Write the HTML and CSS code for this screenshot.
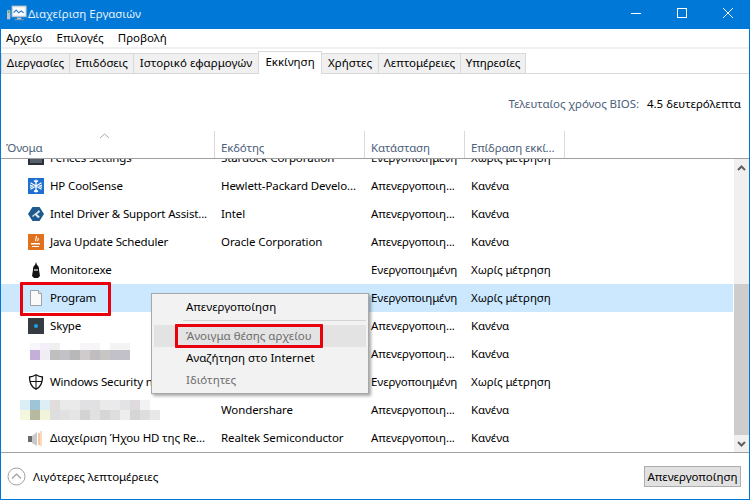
FILE: index.html
```html
<!DOCTYPE html>
<html lang="el">
<head>
<meta charset="utf-8">
<title>Διαχείριση Εργασιών</title>
<link rel="stylesheet" href="styles.css">
</head>
<body>
<div class="window">
  <header class="titlebar">
    <svg class="app-icon" width="20" height="17" viewBox="0 0 24 20">
      <rect x="0" y="6" width="4" height="11" fill="#b9c4cc"/>
      <rect x="1" y="7" width="2" height="2" fill="#4caf50"/>
      <rect x="6" y="1" width="17" height="13" fill="#e8eef2" stroke="#aeb9c1"/>
      <rect x="8" y="3" width="13" height="9" fill="#fff"/>
      <path d="M8 9l3-3 3 3 3-2 3 2" fill="none" stroke="#2f7fd6" stroke-width="1.4"/>
      <rect x="12" y="15" width="5" height="2" fill="#c3ccd2"/>
      <rect x="9" y="17" width="11" height="1" fill="#9aa6ae"/>
    </svg>
    <span class="title">Διαχείριση Εργασιών</span>
    <div class="controls">
      <svg width="46" height="29" viewBox="0 0 46 29"><path d="M18 13.500h10" stroke="#fff"/></svg>
      <svg width="46" height="29" viewBox="0 0 46 29"><rect x="18.500" y="8.500" width="9" height="9" fill="none" stroke="#fff"/></svg>
      <svg width="46" height="29" viewBox="0 0 46 29"><path d="M18 8l10 10M28 8L18 18" stroke="#fff"/></svg>
    </div>
  </header>
  <nav class="menubar"><span>Αρχείο</span><span>Επιλογές</span><span>Προβολή</span></nav>
  <div class="tabs">
    <span class="tab">Διεργασίες</span>
    <span class="tab">Επιδόσεις</span>
    <span class="tab">Ιστορικό εφαρμογών</span>
    <span class="tab active">Εκκίνηση</span>
    <span class="tab">Χρήστες</span>
    <span class="tab">Λεπτομέρειες</span>
    <span class="tab">Υπηρεσίες</span>
  </div>
  <div class="bios"><span class="bios-label">Τελευταίος χρόνος BIOS:</span><span class="bios-value">4.5 δευτερόλεπτα</span></div>
  <div class="head">
    <div class="col first"><svg class="sort" width="11" height="6" viewBox="0 0 11 6"><path d="M1 5l4.500-4 4.500 4" fill="none" stroke="#a0a8b0"/></svg>Όνομα</div>
    <div class="col">Εκδότης</div>
    <div class="col">Κατάσταση</div>
    <div class="col">Επίδραση εκκί...</div>
  </div>
  <div class="body">
    <div class="list">
      <div class="rows">
        <div class="row clipped">
          <div class="name"><svg width="16" height="16" viewBox="0 0 16 16"><rect y="1" width="16" height="14" fill="#2b2f36"/><rect x="2" y="9" width="12" height="4" fill="#56606c"/></svg>Fences Settings</div>
          <div>Stardock Corporation</div><div>Ενεργοποιημένη</div><div>Χωρίς μέτρηση</div>
        </div>
        <div class="row">
          <div class="name"><svg width="16" height="16" viewBox="0 0 16 16"><rect width="16" height="16" fill="#1f6fd0"/><path d="M8 1.500v13M2.500 4.700l11 6.600M13.500 4.700l-11 6.600M6 2.500l2 2 2-2M6 13.500l2-2 2 2M2 7l2.500 1L2 9.500M14 7l-2.500 1 2.500 1.500" fill="none" stroke="#fff" stroke-width="1.200"/></svg>HP CoolSense</div>
          <div>Hewlett-Packard Develo...</div><div>Απενεργοποιη...</div><div>Κανένα</div>
        </div>
        <div class="row">
          <div class="name"><svg width="16" height="16" viewBox="0 0 16 16"><path d="M4.500 1h7L16 8l-4.500 7h-7L0 8z" fill="#1d5a8e"/><path d="M4 10l5-4 2-2 1 2-3 2 3 3-2 1-3-3-2 2z" fill="#dfe8ef"/></svg>Intel Driver &amp; Support Assist...</div>
          <div>Intel</div><div>Απενεργοποιη...</div><div>Κανένα</div>
        </div>
        <div class="row">
          <div class="name"><svg width="16" height="16" viewBox="0 0 16 16"><rect width="16" height="16" fill="#e2711d"/><path d="M8 2c2 2-2 3 0 5M10 4c1 2-1 2 0 3" fill="none" stroke="#fff" stroke-width="1.200"/><path d="M3 9h9v1.500H3zM4 12h7v1H4z" fill="#fff"/></svg>Java Update Scheduler</div>
          <div>Oracle Corporation</div><div>Απενεργοποιη...</div><div>Κανένα</div>
        </div>
        <div class="row">
          <div class="name"><svg width="16" height="16" viewBox="0 0 16 16"><path d="M8 0l1 3c2 1 2 3 2 5l1 6-2 2H6l-2-2 1-6c0-2 0-4 2-5z" fill="#141414"/><rect x="6" y="7" width="4" height="2" fill="#9a9a9a"/></svg>Monitor.exe</div>
          <div></div><div>Ενεργοποιημένη</div><div>Χωρίς μέτρηση</div>
        </div>
        <div class="row selected">
          <div class="name"><svg width="16" height="16" viewBox="0 0 16 16"><path d="M2.500.5h8l3 3v12h-11z" fill="#fafafa" stroke="#9ea3a8"/><path d="M10.500.5v3h3" fill="#e8e8e8" stroke="#9ea3a8"/></svg>Program</div>
          <div></div><div>Ενεργοποιημένη</div><div>Χωρίς μέτρηση</div>
        </div>
        <div class="row">
          <div class="name"><svg width="16" height="16" viewBox="0 0 16 16"><rect width="16" height="16" fill="#363b42"/><circle cx="8" cy="8" r="2" fill="#19a3e8"/></svg>Skype</div>
          <div></div><div>Απενεργοποιη...</div><div>Κανένα</div>
        </div>
        <div class="row">
          <div class="name blurred">
            <svg class="blur-a" width="100" height="17" viewBox="0 0 100 17" shape-rendering="crispEdges">
              <path fill="#f8f6fa" d="M0 0h10v7H0z"/><path fill="#f3eef8" d="M10 0h10v7H10z"/><path fill="#f0eff0" d="M20 0h10v7H20z"/><path fill="#f7f5f8" d="M50 0h20v7H50z"/><path fill="#f5f4f4" d="M80 0h20v7H80z"/>
              <path fill="#c3afd8" d="M0 7h10v10H0z"/><path fill="#f0eef2" d="M10 7h10v10H10z"/><path fill="#c0bfc0" d="M20 7h10v10H20z"/><path fill="#c4c2c6" d="M30 7h10v10H30z"/><path fill="#b8b8b8" d="M40 7h10v10H40z"/><path fill="#cfcbcd" d="M50 7h10v10H50z"/><path fill="#bfbdc0" d="M60 7h10v10H60z"/><path fill="#c7c6c5" d="M70 7h10v10H70z"/><path fill="#c2c0c8" d="M80 7h20v10H80z"/>
            </svg>
          </div>
          <div></div><div>Απενεργοποιη...</div><div>Κανένα</div>
        </div>
        <div class="row">
          <div class="name"><svg width="16" height="16" viewBox="0 0 16 16"><path d="M8 .800c2 1.400 4 2 6.500 2.200 0 6-1.500 10-6.500 12.200C3 13 1.500 9 1.500 3 4 2.800 6 2.200 8 .800z" fill="#fff" stroke="#111" stroke-width="1.300"/><path d="M8 1v14M2 7.500h12" stroke="#111"/></svg>Windows Security notification icon</div>
          <div></div><div>Ενεργοποιημένη</div><div>Χωρίς μέτρηση</div>
        </div>
        <div class="row">
          <div class="name blurred">
            <svg class="blur-b" width="140" height="20" viewBox="0 0 140 20" shape-rendering="crispEdges">
              <path fill="#dbeef5" d="M0 0h10v10H0z"/><path fill="#9fc4d6" d="M10 0h10v10H10z"/><path fill="#dceff5" d="M20 0h10v10H20z"/><path fill="#e0dddc" d="M30 0h10v10H30z"/><path fill="#eaeaea" d="M40 0h20v10H40z"/><path fill="#e1e1e3" d="M60 0h20v10H60z"/><path fill="#eaeaea" d="M80 0h20v10H80z"/><path fill="#e3e3e6" d="M100 0h10v10h-10z"/><path fill="#dedadd" d="M110 0h10v10h-10z"/><path fill="#f2f2f2" d="M120 0h10v10h-10z"/>
              <path fill="#f4f6de" d="M0 10h10v10H0z"/><path fill="#b7b9a0" d="M10 10h10v10H10z"/><path fill="#f1f4d8" d="M20 10h10v10H20z"/><path fill="#dedede" d="M30 10h10v10H30z"/><path fill="#e2e0e2" d="M40 10h10v10H40z"/><path fill="#e5e5e5" d="M50 10h10v10H50z"/><path fill="#d3d3d3" d="M60 10h10v10H60z"/><path fill="#e1e1e1" d="M70 10h10v10H70z"/><path fill="#d6d6d6" d="M80 10h10v10H80z"/><path fill="#dedede" d="M90 10h10v10H90z"/><path fill="#ededed" d="M100 10h10v10h-10z"/><path fill="#d5d5d5" d="M110 10h10v10h-10z"/><path fill="#dedede" d="M120 10h10v10h-10z"/><path fill="#e8e8e8" d="M130 10h10v10h-10z"/>
            </svg>
          </div>
          <div>Wondershare</div><div>Απενεργοποιη...</div><div>Κανένα</div>
        </div>
        <div class="row">
          <div class="name"><svg width="16" height="16" viewBox="0 0 16 16"><rect y="6" width="4" height="6" fill="#6b6b6b"/><path d="M4 6l5-4v14l-5-3z" fill="#c9c9c9"/><path d="M11 3v12" stroke="#ef8a3c"/><path d="M13 1v15" stroke="#f3b486"/></svg>Διαχείριση Ήχου HD της Re...</div>
          <div>Realtek Semiconductor</div><div>Απενεργοποιη...</div><div>Κανένα</div>
        </div>
      </div>
    </div>
    <div class="scrollbar">
      <div class="arrow"><svg width="9" height="6" viewBox="0 0 9 6"><path d="M1 5l3.500-3.500L8 5" fill="none" stroke="#606060" stroke-width="2"/></svg></div>
      <div class="track"><div class="thumb"></div></div>
      <div class="arrow"><svg width="9" height="6" viewBox="0 0 9 6"><path d="M1 1l3.500 3.500L8 1" fill="none" stroke="#606060" stroke-width="2"/></svg></div>
    </div>
  </div>
  <footer class="footer">
    <div class="less">
      <svg width="19" height="19" viewBox="0 0 19 19"><circle cx="9.500" cy="9.500" r="8.500" fill="#fff" stroke="#a0a0a0"/><path d="M5 11.500l4.500-4.500 4.500 4.500" fill="none" stroke="#a0a0a0" stroke-width="1.200"/></svg>
      <span>Λιγότερες λεπτομέρειες</span>
    </div>
    <button class="btn">Απενεργοποίηση</button>
  </footer>

  <div class="menu">
    <div class="item">Απενεργοποίηση</div>
    <div class="sep"></div>
    <div class="item hover disabled">Άνοιγμα θέσης αρχείου</div>
    <div class="item">Αναζήτηση στο Internet</div>
    <div class="item disabled">Ιδιότητες</div>
  </div>
  <div class="mark mark-program"></div>
  <div class="mark mark-open"></div>
</div>
</body>
</html>
```
FILE: styles.css
```css
* { box-sizing: border-box; }
html, body { margin: 0; padding: 0; }
body { width: 750px; height: 500px; overflow: hidden; background: #fff; }
.window {
  position: relative;
  width: 750px; height: 500px;
  display: flex; flex-direction: column;
  border: 1px solid #0078d7; border-top: 0;
  font: 11.5px/16px "Noto Sans", "Open Sans", sans-serif;
  color: #000;
  overflow: hidden;
}
.titlebar {
  height: 29px; flex: none;
  background: #0078d7; color: #fff;
  display: flex; align-items: center;
  padding-left: 7px;
  margin: 0 -1px;
}
.app-icon { margin-right: 1px; margin-top: -2px; }
.title { color: #e6f1fb; margin-top: -2px; }
.controls { margin-left: auto; display: flex; margin-right: -1px; }
.controls svg { display: block; }

.menubar {
  height: 18px; flex: none;
  display: flex; gap: 14px;
  padding-left: 5px;
  background: #fff;
  align-items: center;
}
.tabs {
  height: 27px; flex: none;
  display: grid;
  grid-template-columns: 68px 64px 125px 63px 57px 82px 65px;
  justify-content: start;
  align-items: end;
  border-top: 2px solid #f0f0f0;
  border-bottom: 1px solid #d9d9d9;
}
.tab {
  height: 20px;
  padding-top: 1px;
  text-align: center;
  background: #f0f0f0;
  border: 1px solid #d9d9d9;
  border-bottom: 0;
  margin-right: -1px;
  white-space: nowrap;
}
.tab.active {
  height: 23px;
  background: #fff;
  padding-top: 2px;
  margin-bottom: -1px;
  position: relative;
}
.bios {
  height: 57px; flex: none;
  display: flex; justify-content: flex-end; align-items: center;
  gap: 8px;
  padding: 2px 8px 0 0;
}
.bios-label { color: #4c607a; letter-spacing: -.08px; }

.head {
  height: 28px; flex: none;
  display: grid;
  grid-template-columns: 214px 150px 100px 100px;
  border-bottom: 1px solid #a0a0a0;
}
.col {
  position: relative;
  border-right: 1px solid #d9d9d9;
  color: #4c607a;
  padding: 9px 0 0 6px;
  white-space: nowrap;
  overflow: hidden;
  letter-spacing: -.15px;
}
.col.first { padding-left: 5px; }
.sort { position: absolute; left: 98px; top: 2px; }

.body { height: 294px; flex: none; display: flex; border-bottom: 1px solid #a0a0a0; }
.list { flex: 1; overflow: hidden; margin-right: 1px; }
.rows { margin-top: -15px; }
.row {
  height: 28px;
  display: grid;
  grid-template-columns: 214px 150px 100px 1fr;
  align-items: center;
  white-space: nowrap;
  letter-spacing: -.1px;
}
.row > div { padding-left: 6px; overflow: hidden; }
.row .name {
  display: flex; align-items: center; gap: 6px;
  padding-left: 27px;
  letter-spacing: -.15px;
}
.row svg { flex: none; display: block; }
.row .name.blurred { overflow: visible; padding-left: 0; }
.blur-a { margin-left: 29px; margin-top: -5px; }
.blur-b { margin-left: 19px; }
.selected { background: #cce8ff; }

.scrollbar { width: 15px; flex: none; background: #f0f0f0; display: flex; flex-direction: column; }
.arrow { height: 17px; flex: none; display: flex; align-items: center; justify-content: center; }
.track { flex: 1; display: flex; padding-top: 108px; }
.thumb { flex: 1; background: #cdcdcd; }

.footer {
  flex: 1;
  display: flex; align-items: center; justify-content: space-between;
  padding: 0 8px 0 6px;
}
.less { display: flex; align-items: center; gap: 7px; margin-top: 1px; }
.less svg { display: block; }
.btn {
  width: 97px; height: 21px;
  padding: 0;
  margin-top: 1px;
  background: #e1e1e1;
  border: 1px solid #adadad;
  font: inherit; color: #000;
  white-space: nowrap;
}

.menu {
  position: absolute; left: 150px; top: 293px;
  width: 218px; height: 101px;
  background: #f2f2f2;
  border: 1px solid #a8a8a8;
  box-shadow: 2px 2px 3px rgba(0,0,0,.35);
  padding: 2px;
}
.item { height: 22px; line-height: 22px; padding-left: 32px; white-space: nowrap; }
.sep { height: 1px; background: #d4d4d4; margin: 2px 0 4px 29px; }
.item.hover { background: #e3e3e3; }
.item.disabled { color: #6d6d6d; }

.mark { position: absolute; border: 3px solid #e8000d; border-radius: 1px; }
.mark-program { left: 19px; top: 282px; width: 91px; height: 34px; }
.mark-open { left: 174px; top: 324px; width: 148px; height: 24px; }
```
